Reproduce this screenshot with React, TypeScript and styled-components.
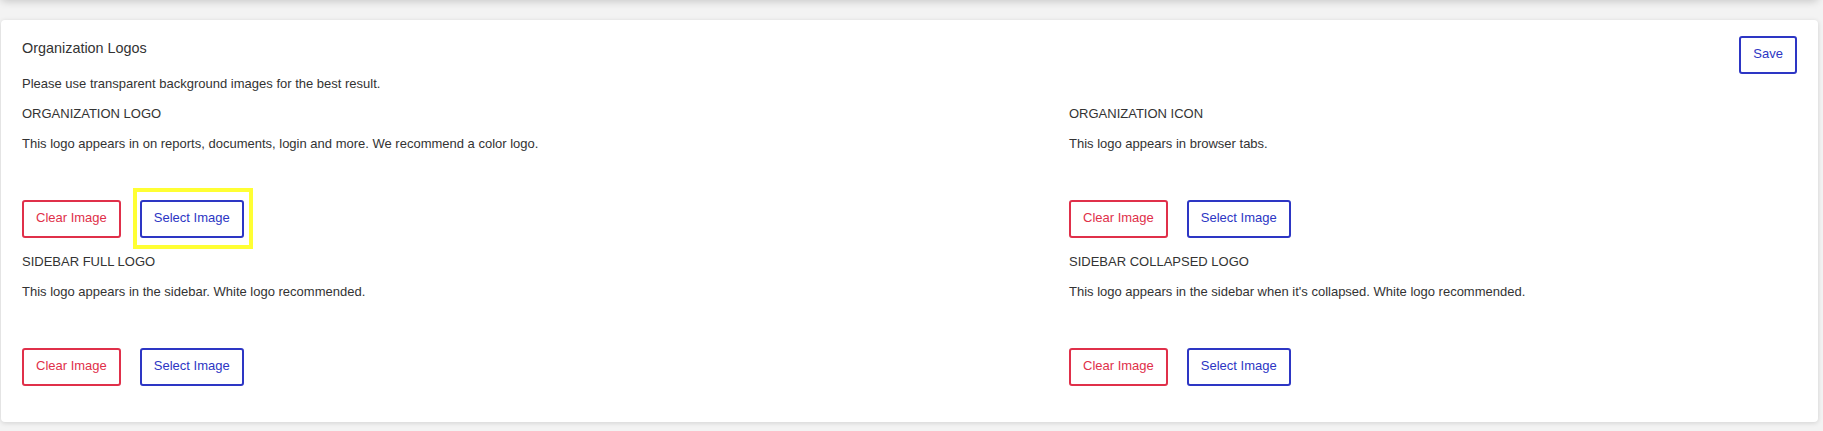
import React from "react";
import styled, { createGlobalStyle, css } from "styled-components";

const GlobalStyle = createGlobalStyle`
  html, body {
    margin: 0;
    padding: 0;
    background: #f3f3f3;
    font-family: "Liberation Sans", Arial, sans-serif;
    color: #333333;
  }
  * { box-sizing: border-box; }
`;

const Page = styled.div`
  display: flex;
  flex-direction: column;
  gap: 20px;
  padding: 0 5px 0 1px;
  min-height: 431px;
`;

const PreviousPanel = styled.div`
  height: 40px;
  margin: -40px 0 0 0;
  background: #ffffff;
  border-radius: 4px;
  box-shadow: 0 1px 8px rgba(0, 0, 0, 0.2);
`;

const Card = styled.section`
  background: #ffffff;
  border-radius: 4px;
  box-shadow: 0 1px 5px rgba(0, 0, 0, 0.14);
  padding: 16px 21px 20px 21px;
`;

const Header = styled.div`
  display: flex;
  justify-content: space-between;
  align-items: flex-start;
  height: 38px;
`;

const Title = styled.h2`
  margin: 4px 0 0 0;
  font-size: 14.4px;
  line-height: 17px;
  font-weight: 400;
  color: #333333;
`;

const Hint = styled.p`
  margin: 2px 0 15px 0;
  font-size: 13px;
  line-height: 15px;
`;

const Grid = styled.div`
  display: grid;
  grid-template-columns: minmax(0, 1047fr) minmax(0, 728fr);
`;

const Section = styled.div`
  display: flex;
  flex-direction: column;
  padding-bottom: 16px;
`;

const Heading = styled.div`
  font-size: 13px;
  line-height: 15px;
  margin-bottom: 15px;
  text-transform: uppercase;
`;

const Description = styled.p`
  margin: 0 0 49px 0;
  font-size: 13px;
  line-height: 15px;
`;

const ButtonRow = styled.div`
  display: flex;
  gap: 19px;
`;

const OutlineButton = styled.button<{ $tone: "danger" | "primary"; $highlighted?: boolean }>`
  position: relative;
  font-family: "Liberation Sans", Arial, sans-serif;
  font-size: 13px;
  line-height: 14px;
  height: 38px;
  padding: 9px 12px 11px 12px;
  background: #ffffff;
  border: 2px solid ${(p) => (p.$tone === "danger" ? "#e0304a" : "#2d36c4")};
  color: ${(p) => (p.$tone === "danger" ? "#e0304a" : "#2d36c4")};
  border-radius: 3px;
  cursor: pointer;
  white-space: nowrap;
  ${(p) =>
    p.$highlighted &&
    css`
      &::after {
        content: "";
        position: absolute;
        top: -14px;
        left: -9px;
        right: -11px;
        bottom: -13px;
        border: 4px solid #ffff33;
        pointer-events: none;
      }
    `}
`;

const sections = [
  {
    heading: "Organization Logo",
    text: "This logo appears in on reports, documents, login and more. We recommend a color logo.",
    highlight: true,
  },
  {
    heading: "Organization Icon",
    text: "This logo appears in browser tabs.",
  },
  {
    heading: "Sidebar Full Logo",
    text: "This logo appears in the sidebar. White logo recommended.",
  },
  {
    heading: "Sidebar Collapsed Logo",
    text: "This logo appears in the sidebar when it's collapsed. White logo recommended.",
  },
];

export default function App() {
  return (
    <>
      <GlobalStyle />
      <Page>
        <PreviousPanel />
        <Card>
          <Header>
            <Title>Organization Logos</Title>
            <OutlineButton $tone="primary">Save</OutlineButton>
          </Header>
          <Hint>Please use transparent background images for the best result.</Hint>
          <Grid>
            {sections.map((s) => (
              <Section key={s.heading}>
                <Heading>{s.heading}</Heading>
                <Description>{s.text}</Description>
                <ButtonRow>
                  <OutlineButton $tone="danger">Clear Image</OutlineButton>
                  <OutlineButton $tone="primary" $highlighted={s.highlight}>
                    Select Image
                  </OutlineButton>
                </ButtonRow>
              </Section>
            ))}
          </Grid>
        </Card>
      </Page>
    </>
  );
}
